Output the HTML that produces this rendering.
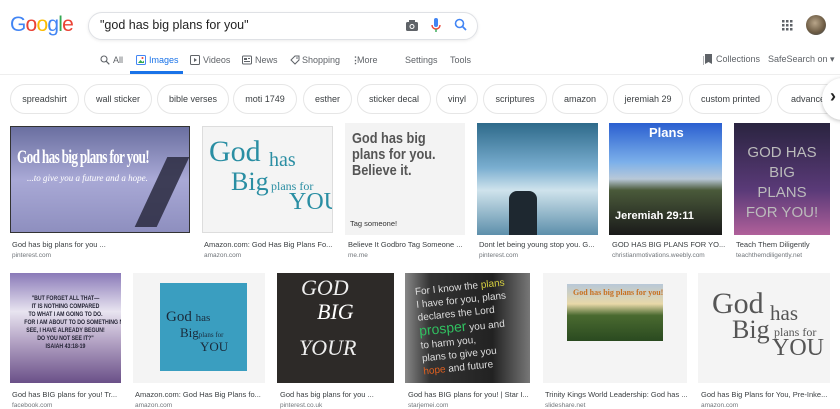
<!DOCTYPE html>
<html><head><meta charset="utf-8"><style>
*{margin:0;padding:0;box-sizing:border-box}
body{width:840px;height:404px;overflow:hidden;background:#fff;font-family:"Liberation Sans",Arial,sans-serif;position:relative;color:#202124}
.a{position:absolute}
.logo{left:10px;top:13px;font-size:21px;letter-spacing:-0.8px}
.sb{left:88px;top:12px;width:390px;height:28px;border:1px solid #dfe1e5;border-radius:14px;box-shadow:0 1px 3px rgba(0,0,0,.08)}
.q{left:100px;top:18px;font-size:12.5px;color:#222}
.nav{top:55px;font-size:9px;color:#5f6368}
.chip{top:84px;height:30px;border:1px solid #e6e6e6;border-radius:15px;font-size:9px;color:#3c4043;text-align:center;line-height:29px}
.im{overflow:hidden}
.t{font-size:7.5px;color:#3c4043;white-space:nowrap}
.s{font-size:6.5px;color:#70757a}
</style></head><body>
<div class="a logo"><span style="color:#4285f4">G</span><span style="color:#ea4335">o</span><span style="color:#fbbc05">o</span><span style="color:#4285f4">g</span><span style="color:#34a853">l</span><span style="color:#ea4335">e</span></div>
<div class="a sb"></div>
<div class="a q">"god has big plans for you"</div>
<svg class="a" style="left:405px;top:19px" width="14" height="13"><rect x="1" y="3" width="12" height="9" rx="1.5" fill="#5f6368"/><rect x="4" y="1" width="6" height="3" fill="#5f6368"/><circle cx="7" cy="7.5" r="2.5" fill="#fff"/><circle cx="7" cy="7.5" r="1.5" fill="#5f6368"/></svg>
<svg class="a" style="left:431px;top:17px" width="10" height="16"><rect x="3" y="1" width="4" height="9" rx="2" fill="#4285f4"/><path d="M1 8a4 4 0 0 0 8 0" stroke="#ea4335" fill="none" stroke-width="1.4"/><rect x="4.3" y="12" width="1.4" height="3" fill="#34a853"/></svg>
<svg class="a" style="left:454px;top:18px" width="13" height="13"><circle cx="5.5" cy="5.5" r="4" stroke="#4285f4" stroke-width="1.6" fill="none"/><path d="M8.5 8.5l3.5 3.5" stroke="#4285f4" stroke-width="1.8"/></svg>
<svg class="a" style="left:782px;top:20px" width="11" height="11" fill="#5f6368"><rect x="0" y="0" width="2.5" height="2.5"/><rect x="4" y="0" width="2.5" height="2.5"/><rect x="8" y="0" width="2.5" height="2.5"/><rect x="0" y="4" width="2.5" height="2.5"/><rect x="4" y="4" width="2.5" height="2.5"/><rect x="8" y="4" width="2.5" height="2.5"/><rect x="0" y="8" width="2.5" height="2.5"/><rect x="4" y="8" width="2.5" height="2.5"/><rect x="8" y="8" width="2.5" height="2.5"/></svg>
<div class="a" style="left:806px;top:15px;width:20px;height:20px;border-radius:50%;background:radial-gradient(circle at 45% 40%,#b8a58a,#6b5a42 60%,#3a4a5a)"></div>

<svg class="a" style="left:100px;top:55px" width="10" height="10"><circle cx="4" cy="4" r="3" stroke="#5f6368" fill="none" stroke-width="1.1"/><path d="M6.3 6.3l3 3" stroke="#5f6368" stroke-width="1.2"/></svg>
<div class="a nav" style="left:113px">All</div>
<svg class="a" style="left:136px;top:55px" width="10" height="10"><rect x="0.5" y="0.5" width="9" height="9" rx="1" stroke="#4285f4" fill="none"/><path d="M2 8l2.5-3 2 2 1.5-1.5V8z" fill="#34a853"/><circle cx="6.5" cy="3" r="1" fill="#ea4335"/></svg>
<div class="a nav" style="left:149px;color:#1a73e8">Images</div>
<div class="a" style="left:130px;top:71px;width:53px;height:3px;background:#1a73e8"></div>
<svg class="a" style="left:190px;top:55px" width="10" height="10"><rect x="0.5" y="0.5" width="9" height="9" rx="1" stroke="#5f6368" fill="none"/><path d="M4 3v4l3-2z" fill="#5f6368"/></svg>
<div class="a nav" style="left:203px">Videos</div>
<svg class="a" style="left:242px;top:55px" width="10" height="10"><rect x="0.5" y="1" width="9" height="8" rx="1" stroke="#5f6368" fill="none"/><rect x="2" y="3" width="3" height="2" fill="#5f6368"/><path d="M6 3.5h2M2 6.5h6" stroke="#5f6368"/></svg>
<div class="a nav" style="left:255px">News</div>
<svg class="a" style="left:290px;top:55px" width="10" height="10"><path d="M5 1h4v4L5 9 1 5z" stroke="#5f6368" fill="none"/><circle cx="7" cy="3" r=".8" fill="#5f6368"/></svg>
<div class="a nav" style="left:302px">Shopping</div>
<div class="a nav" style="left:351px;font-weight:bold">⋮</div>
<div class="a nav" style="left:357px">More</div>
<div class="a nav" style="left:405px">Settings</div>
<div class="a nav" style="left:450px">Tools</div>
<svg class="a" style="left:703px;top:54px" width="9" height="11"><path d="M2 0h7v10L5.5 8 2 10z" fill="#5f6368"/><path d="M0 2v9" stroke="#5f6368"/></svg>
<div class="a nav" style="left:716px;top:54px">Collections</div>
<div class="a nav" style="left:768px;top:54px">SafeSearch on ▾</div>
<div class="a" style="left:0;top:74px;width:840px;height:1px;background:#eee"></div>

<div class="a chip" style="left:10px;width:69px">spreadshirt</div>
<div class="a chip" style="left:84px;width:68px">wall sticker</div>
<div class="a chip" style="left:157px;width:72px">bible verses</div>
<div class="a chip" style="left:233px;width:64px">moti 1749</div>
<div class="a chip" style="left:303px;width:49px">esther</div>
<div class="a chip" style="left:357px;width:74px">sticker decal</div>
<div class="a chip" style="left:436px;width:42px">vinyl</div>
<div class="a chip" style="left:483px;width:64px">scriptures</div>
<div class="a chip" style="left:552px;width:56px">amazon</div>
<div class="a chip" style="left:613px;width:70px">jeremiah 29</div>
<div class="a chip" style="left:689px;width:83px">custom printed</div>
<div class="a chip" style="left:777px;width:70px;text-align:left;padding-left:13px">advance</div>
<div class="a" style="left:822px;top:78px;width:40px;height:42px;border-radius:50%;background:#fff;box-shadow:0 1px 4px rgba(0,0,0,.25)"></div>
<div class="a" style="left:830px;top:86px;font-size:18px;font-weight:bold;color:#222">›</div>

<!-- row 1 -->
<div class="a im" style="left:10px;top:126px;width:180px;height:107px;background:linear-gradient(180deg,#6a6fa0,#a9a9d6 50%,#8e8fbf);border:1px solid #333">
<div style="position:absolute;left:6px;top:20px;color:#fff;font:bold 19px 'Liberation Serif',serif;letter-spacing:-1px;transform:scaleX(.7);transform-origin:left;white-space:nowrap">God has big plans for you!</div>
<div style="position:absolute;left:16px;top:46px;color:#fff;font:italic 9px 'Liberation Serif',serif;white-space:nowrap">...to give you a future and a hope.</div>
<div style="position:absolute;left:140px;top:30px;width:22px;height:70px;background:#2a2a40;transform:skewX(-25deg);opacity:.85"></div></div>
<div class="a im" style="left:202px;top:126px;width:131px;height:107px;background:#f4f4f4;border:1px solid #ddd;color:#2a8ea3;font-family:'Liberation Serif',serif;white-space:nowrap">
<div style="position:absolute;left:6px;top:8px;font-size:30px">God</div><div style="position:absolute;left:66px;top:22px;font-size:20px">has</div>
<div style="position:absolute;left:28px;top:40px;font-size:26px">Big</div><div style="position:absolute;left:68px;top:52px;font-size:12px">plans for</div>
<div style="position:absolute;left:86px;top:62px;font-size:24px">YOU</div></div>
<div class="a im" style="left:345px;top:123px;width:120px;height:112px;background:#f3f3f3;color:#555">
<div style="position:absolute;left:7px;top:8px;font:bold 15px/16px 'Liberation Sans',sans-serif;transform:scaleX(.85);transform-origin:left;white-space:nowrap">God has big<br>plans for you.<br>Believe it.</div>
<div style="position:absolute;left:5px;top:96px;font-size:7.5px;color:#333">Tag someone!</div></div>
<div class="a im" style="left:477px;top:123px;width:121px;height:112px;background:linear-gradient(180deg,#2e6a8a,#7aaed0 40%,#cfe3ec 60%,#5d8fab)">
<div style="position:absolute;left:32px;top:68px;width:28px;height:44px;background:#1e2830;border-radius:8px 8px 0 0"></div></div>
<div class="a im" style="left:609px;top:123px;width:113px;height:112px;background:linear-gradient(180deg,#2a5fd0,#7cb0ea 35%,#b8c8d8 50%,#4a5a3a 60%,#1a1a1a)">
<div style="position:absolute;left:40px;top:2px;color:#fff;font:bold 13px sans-serif">Plans</div>
<div style="position:absolute;left:6px;top:87px;color:#fff;font:bold 11px sans-serif">Jeremiah 29:11</div></div>
<div class="a im" style="left:734px;top:123px;width:96px;height:112px;background:linear-gradient(180deg,#2a2440,#5a3a78 60%,#b0609a)">
<div style="position:absolute;left:10px;top:20px;color:#bbb;font:15px/20px 'Liberation Sans',sans-serif;text-align:center;width:76px">GOD HAS<br>BIG PLANS<br>FOR YOU!</div></div>
<div class="a t" style="left:12px;top:240px">God has big plans for you ...</div><div class="a s" style="left:12px;top:252px">pinterest.com</div>
<div class="a t" style="left:204px;top:240px">Amazon.com: God Has Big Plans Fo...</div><div class="a s" style="left:204px;top:252px">amazon.com</div>
<div class="a t" style="left:348px;top:240px">Believe It Godbro Tag Someone ...</div><div class="a s" style="left:348px;top:252px">me.me</div>
<div class="a t" style="left:479px;top:240px">Dont let being young stop you. G...</div><div class="a s" style="left:479px;top:252px">pinterest.com</div>
<div class="a t" style="left:612px;top:240px">GOD HAS BIG PLANS FOR YO...</div><div class="a s" style="left:612px;top:252px">christianmotivations.weebly.com</div>
<div class="a t" style="left:736px;top:240px">Teach Them Diligently</div><div class="a s" style="left:736px;top:252px">teachthemdiligently.net</div>
<!-- row 2 -->
<div class="a im" style="left:10px;top:273px;width:111px;height:110px;background:linear-gradient(180deg,#8a7ab8,#e8e4f0 35%,#b8a8c8 60%,#6a5088)">
<div style="position:absolute;left:4px;top:22px;width:103px;text-align:center;font:bold 6.5px/8px sans-serif;color:#223;white-space:nowrap;transform:scaleX(.8)">"BUT FORGET ALL THAT—<br>IT IS NOTHING COMPARED<br>TO WHAT I AM GOING TO DO.<br>FOR I AM ABOUT TO DO SOMETHING NEW.<br>SEE, I HAVE ALREADY BEGUN!<br>DO YOU NOT SEE IT?"<br>ISAIAH 43:18-19</div></div>
<div class="a im" style="left:133px;top:273px;width:132px;height:110px;background:#f4f4f4">
<div style="position:absolute;left:27px;top:10px;width:87px;height:88px;background:#3a9ec0;color:#1a2a3a;font-family:'Liberation Serif',serif;white-space:nowrap">
<div style="position:absolute;left:6px;top:26px;font-size:15px">God <span style="font-size:11px">has</span></div><div style="position:absolute;left:20px;top:42px;font-size:13px">Big<span style="font-size:7px">plans for</span></div><div style="position:absolute;left:40px;top:56px;font-size:13px">YOU</div></div></div>
<div class="a im" style="left:277px;top:273px;width:117px;height:110px;background:#2d2a28;color:#eee;font:italic 22px 'Liberation Serif',serif">
<div style="position:absolute;left:24px;top:2px">GOD</div><div style="position:absolute;left:40px;top:26px;color:#fff">BIG</div><div style="position:absolute;left:22px;top:62px">YOUR</div></div>
<div class="a im" style="left:405px;top:273px;width:125px;height:110px;background:linear-gradient(90deg,#888,#333 20%,#222 70%,#777)">
<div style="position:absolute;left:14px;top:8px;color:#ddd;font:10px/13px sans-serif;transform:rotate(-6deg);white-space:nowrap">For I know the <span style="color:#d6d040">plans</span><br>I have for you, plans<br>declares the Lord<br><span style="color:#30c060;font-size:14px">prosper</span> you and<br>to harm you,<br>plans to give you<br><span style="color:#e06020">hope</span> and future</div></div>
<div class="a im" style="left:543px;top:273px;width:144px;height:110px;background:#f4f4f4">
<div style="position:absolute;left:24px;top:11px;width:96px;height:57px;background:linear-gradient(180deg,#b8c8d8,#e8d8a8 35%,#4a6a30 55%,#2a4a20)"><div style="font:bold 8px serif;color:#c87020;margin:4px 0 0 6px;white-space:nowrap">God has big plans for you!</div></div></div>
<div class="a im" style="left:698px;top:273px;width:132px;height:110px;background:#f4f4f4;color:#555;font-family:'Liberation Serif',serif;white-space:nowrap">
<div style="position:absolute;left:14px;top:14px;font-size:30px">God</div><div style="position:absolute;left:72px;top:28px;font-size:21px">has</div>
<div style="position:absolute;left:34px;top:42px;font-size:26px">Big</div><div style="position:absolute;left:76px;top:52px;font-size:12px">plans for</div>
<div style="position:absolute;left:74px;top:62px;font-size:24px">YOU</div></div>
<div class="a t" style="left:12px;top:390px">God has BIG plans for you! Tr...</div><div class="a s" style="left:12px;top:402px">facebook.com</div>
<div class="a t" style="left:135px;top:390px">Amazon.com: God Has Big Plans fo...</div><div class="a s" style="left:135px;top:402px">amazon.com</div>
<div class="a t" style="left:280px;top:390px">God has big plans for you ...</div><div class="a s" style="left:280px;top:402px">pinterest.co.uk</div>
<div class="a t" style="left:408px;top:390px">God has BIG plans for you! | Star I...</div><div class="a s" style="left:408px;top:402px">starjemei.com</div>
<div class="a t" style="left:545px;top:390px">Trinity Kings World Leadership: God has ...</div><div class="a s" style="left:545px;top:402px">slideshare.net</div>
<div class="a t" style="left:701px;top:390px">God has Big Plans for You, Pre-Inke...</div><div class="a s" style="left:701px;top:402px">amazon.com</div>
</body></html>
